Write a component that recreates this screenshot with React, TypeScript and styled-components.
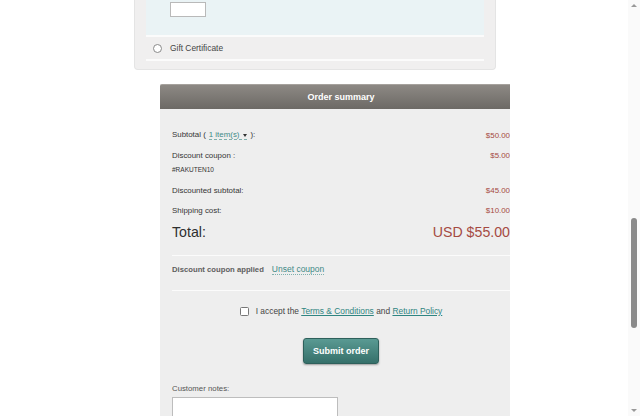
import React from "react";
import styled, { createGlobalStyle } from "styled-components";

const Global = createGlobalStyle`
  html, body { margin: 0; padding: 0; background: #fff; }
  body { width: 640px; height: 416px; overflow: hidden; font-family: "Liberation Sans", Arial, sans-serif; color: #3a3a3a; }
  * { box-sizing: border-box; }
`;

const Page = styled.div`
  width: 640px;
  height: 416px;
  display: flex;
  flex-direction: column;
  overflow: hidden;
`;

const PaymentPanel = styled.div`
  margin-left: 134px;
  width: 362px;
  background: #f0efef;
  border: 1px solid #e4e4e4;
  border-top: none;
  border-radius: 0 0 4px 4px;
  padding: 0 11px 8px 11px;
  flex-shrink: 0;
`;

const MethodBody = styled.div`
  height: 35px;
  background: #eaf3f5;
  padding: 2px 0 0 24px;
`;

const SmallInput = styled.div`
  width: 36px;
  height: 15px;
  background: #fff;
  border: 1px solid #b9b9b9;
`;

const Separator = styled.div`
  height: 2px;
  background: #fbfbfb;
`;

const MethodRow = styled.label`
  height: 22px;
  display: flex;
  align-items: center;
  gap: 8px;
  padding-left: 7px;
  font-size: 8.4px;
  color: #454545;
`;

const Radio = styled.span`
  width: 9px;
  height: 9px;
  border-radius: 50%;
  border: 1px solid #8a8a8a;
  background: #fff;
`;

const SummaryClip = styled.section`
  margin-left: 160px;
  margin-top: 14px;
  width: 350px;
  overflow: hidden;
  flex-shrink: 0;
`;

const Summary = styled.div`
  width: 362px;
  background: #eeeeee;
`;

const SummaryHeader = styled.h2`
  margin: 0;
  height: 25px;
  display: flex;
  align-items: center;
  justify-content: center;
  background: linear-gradient(#8d8984, #6c6965);
  border-top: 1px solid #a6a29d;
  color: #fff;
  font-size: 9px;
  font-weight: bold;
  border-radius: 2px 2px 0 0;
`;

const SummaryBody = styled.div`
  padding: 16px 12px 0 12px;
  display: flex;
  flex-direction: column;
`;

const Row = styled.div<{ $h?: number; $big?: boolean }>`
  height: ${(p) => p.$h ?? 20}px;
  display: flex;
  align-items: center;
  justify-content: space-between;
  font-size: ${(p) => (p.$big ? "14.2px" : "7.9px")};
  color: ${(p) => (p.$big ? "#2f2f2f" : "#353535")};
`;

const Amount = styled.span<{ $big?: boolean }>`
  color: #a54a42;
  font-size: ${(p) => (p.$big ? "14.2px" : "7.9px")};
`;

const Code = styled.div`
  height: 10px;
  line-height: 10px;
  font-size: 6.5px;
  color: #333;
  margin-bottom: 5px;
`;

const ItemsLink = styled.span`
  color: #3f8a87;
  border-bottom: 1px dashed #7fb0ad;
  margin: 0 3px;
  display: inline-flex;
  align-items: center;
  gap: 4px;
`;

const Caret = styled.span`
  width: 0;
  height: 0;
  border-left: 2.5px solid transparent;
  border-right: 2.5px solid transparent;
  border-top: 3px solid #333;
  margin-top: 2px;
`;

const Rule = styled.div<{ $mt: number }>`
  height: 1px;
  background: #fbfbfb;
  margin-top: ${(p) => p.$mt}px;
`;

const CouponRow = styled.div`
  height: 20px;
  margin-top: 3px;
  display: flex;
  align-items: center;
  gap: 8px;
  font-size: 7.7px;
  font-weight: bold;
  color: #5e5e5e;
`;

const UnsetLink = styled.span`
  font-size: 8.5px;
  font-weight: normal;
  color: #3f8a87;
  border-bottom: 1px dotted #7fb0ad;
`;

const AcceptRow = styled.label`
  height: 20px;
  margin-top: 10px;
  display: flex;
  align-items: center;
  justify-content: center;
  gap: 6px;
  font-size: 8.4px;
  color: #444;
`;

const Check = styled.span`
  width: 9px;
  height: 9px;
  border: 1px solid #777;
  border-radius: 1.5px;
  background: #fff;
  margin-right: 1px;
`;

const TextLink = styled.span`
  color: #2f8581;
  text-decoration: underline;
`;

const SubmitButton = styled.button`
  align-self: center;
  margin-top: 17px;
  width: 76px;
  height: 26px;
  border: 1px solid #2e605b;
  border-radius: 3px;
  background: linear-gradient(#5a9a93, #36706a);
  box-shadow: 0 1px 2px rgba(0, 0, 0, 0.35);
  color: #fff;
  font-family: "Liberation Sans", Arial, sans-serif;
  font-size: 9px;
  font-weight: bold;
  padding: 0;
`;

const NotesLabel = styled.div`
  margin-top: 19px;
  height: 12px;
  line-height: 12px;
  font-size: 7.8px;
  color: #555;
`;

const Notes = styled.div`
  margin-top: 2px;
  width: 166px;
  height: 40px;
  background: #fff;
  border: 1px solid #bdbdbd;
`;

const ScrollTrack = styled.div`
  position: fixed;
  top: 0;
  right: 0;
  width: 12px;
  height: 416px;
  background: #fafafa;
`;

const ScrollThumb = styled.div`
  position: absolute;
  left: 3px;
  top: 218px;
  width: 6px;
  height: 110px;
  border-radius: 3px;
  background: #8a8a8a;
`;

const Arrow = styled.div<{ $down?: boolean }>`
  position: absolute;
  left: 3px;
  ${(p) => (p.$down ? "bottom: 4px;" : "top: 4px;")}
  width: 0;
  height: 0;
  border-left: 3px solid transparent;
  border-right: 3px solid transparent;
  ${(p) => (p.$down ? "border-top: 3px solid #999;" : "border-bottom: 3px solid #999;")}
`;

export default function App() {
  return (
    <>
      <Global />
      <Page>
        <PaymentPanel>
          <MethodBody>
            <SmallInput />
          </MethodBody>
          <Separator />
          <MethodRow>
            <Radio />
            Gift Certificate
          </MethodRow>
          <Separator />
        </PaymentPanel>

        <SummaryClip>
          <Summary>
            <SummaryHeader>Order summary</SummaryHeader>
            <SummaryBody>
              <Row>
                <span>
                  Subtotal (
                  <ItemsLink>
                    1 item(s) <Caret />
                  </ItemsLink>
                  ):
                </span>
                <Amount>$50.00</Amount>
              </Row>
              <Row>
                <span>Discount coupon :</span>
                <Amount>$5.00</Amount>
              </Row>
              <Code>#RAKUTEN10</Code>
              <Row>
                <span>Discounted subtotal:</span>
                <Amount>$45.00</Amount>
              </Row>
              <Row $h={21}>
                <span>Shipping cost:</span>
                <Amount>$10.00</Amount>
              </Row>
              <Row $h={22} $big>
                <span>Total:</span>
                <Amount $big>USD $55.00</Amount>
              </Row>
              <Rule $mt={12} />
              <CouponRow>
                Discount coupon applied
                <UnsetLink>Unset coupon</UnsetLink>
              </CouponRow>
              <Rule $mt={11} />
              <AcceptRow>
                <Check />
                <span>
                  I accept the <TextLink>Terms &amp; Conditions</TextLink> and{" "}
                  <TextLink>Return Policy</TextLink>
                </span>
              </AcceptRow>
              <SubmitButton>Submit order</SubmitButton>
              <NotesLabel>Customer notes:</NotesLabel>
              <Notes />
            </SummaryBody>
          </Summary>
        </SummaryClip>
      </Page>
      <ScrollTrack>
        <Arrow />
        <ScrollThumb />
        <Arrow $down />
      </ScrollTrack>
    </>
  );
}
